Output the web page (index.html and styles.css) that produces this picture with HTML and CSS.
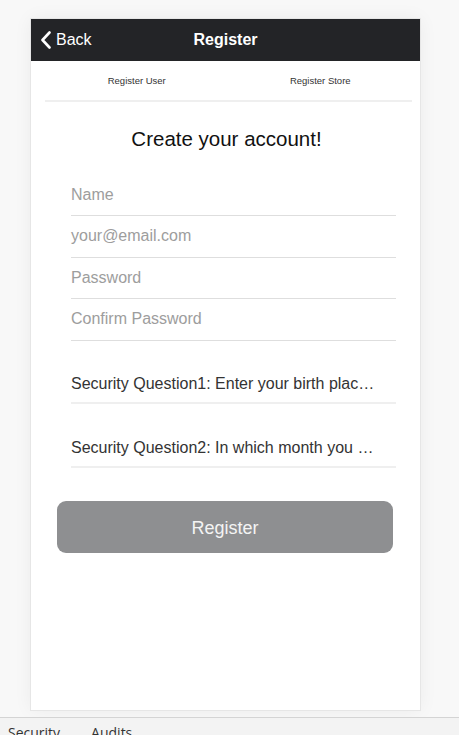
FILE: index.html
```html
<!DOCTYPE html>
<html lang="en">
<head>
<meta charset="utf-8">
<title>Register</title>
<link rel="stylesheet" href="styles.css">
</head>
<body>
<div class="viewport">
  <div class="phone">
    <header class="topbar">
      <div class="back">
        <svg class="chev" width="12" height="18" viewBox="0 0 12 18"><polyline points="9.5,1.5 2.5,9 9.5,16.5" fill="none" stroke="#ffffff" stroke-width="2.6" stroke-linecap="round" stroke-linejoin="round"/></svg>
        <span>Back</span>
      </div>
      <div class="title">Register</div>
      <div class="spacer"></div>
    </header>
    <nav class="tabs">
      <div class="tab">Register User</div>
      <div class="tab">Register Store</div>
    </nav>
    <h1 class="heading">Create your account!</h1>
    <form class="form">
      <div class="field placeholder">Name</div>
      <div class="field placeholder">your@email.com</div>
      <div class="field placeholder">Password</div>
      <div class="field placeholder">Confirm Password</div>
      <div class="select"><span class="select-text">Security Question1: Enter your birth place name?</span></div>
      <div class="select"><span class="select-text">Security Question2: In which month you were born?</span></div>
      <div class="btn">Register</div>
    </form>
  </div>
</div>
<div class="devtools">
  <span class="dt-tab">Security</span>
  <span class="dt-tab">Audits</span>
</div>
</body>
</html>
```
FILE: styles.css
```css
html, body {
  margin: 0;
  padding: 0;
}
body {
  width: 459px;
  height: 735px;
  overflow: hidden;
  background: #f8f8f8;
  font-family: "Liberation Sans", Arial, sans-serif;
  display: flex;
  flex-direction: column;
}
.viewport {
  height: 717px;
  flex: none;
  padding: 19px 0 0 31px;
  box-sizing: border-box;
}
.phone {
  width: 389px;
  height: 691px;
  background: #ffffff;
  box-shadow: 0 0 0 1px #e6e6e6, 0 0 18px rgba(0, 0, 0, 0.06);
  display: flex;
  flex-direction: column;
}
.topbar {
  height: 42px;
  flex: none;
  background: #232427;
  color: #ffffff;
  display: grid;
  grid-template-columns: 1fr auto 1fr;
  align-items: center;
}
.back {
  display: flex;
  align-items: center;
  gap: 4px;
  padding-left: 9px;
  font-size: 16px;
}
.chev {
  display: block;
}
.title {
  font-weight: bold;
  font-size: 16px;
}
.tabs {
  margin-left: 14px;
  width: 367px;
  height: 39px;
  flex: none;
  border-bottom: 2px solid #efefef;
  display: grid;
  grid-template-columns: 1fr 1fr;
  align-items: center;
}
.tab {
  text-align: center;
  font-size: 9.5px;
  color: #333333;
}
.heading {
  margin: 25px 0 0;
  font-weight: normal;
  font-size: 20.5px;
  line-height: 24px;
  text-align: center;
  color: #111111;
  padding-left: 2px;
}
.form {
  margin: 24px 0 0;
  display: flex;
  flex-direction: column;
}
.field {
  margin-left: 40px;
  width: 325px;
  height: 40.4px;
  line-height: 40px;
  border-bottom: 1px solid #dedede;
  font-size: 16px;
}
.placeholder {
  color: #9d9d9d;
}
.select {
  margin-left: 40px;
  width: 325px;
  height: 63.7px;
  box-sizing: border-box;
  padding: 0 20px 9px 0;
  border-bottom: 2px solid #efefef;
  display: flex;
  align-items: flex-end;
  font-size: 16px;
  color: #333333;
}
.select-text {
  display: block;
  width: 100%;
  white-space: nowrap;
  overflow: hidden;
  text-overflow: ellipsis;
}
.btn {
  margin: 33px 0 0 26px;
  width: 336px;
  height: 52px;
  box-sizing: border-box;
  padding-top: 3px;
  border-radius: 9px;
  background: #8e8f91;
  color: #f4f4f4;
  font-size: 18px;
  display: flex;
  align-items: center;
  justify-content: center;
}
.devtools {
  flex: 1;
  border-top: 1px solid #d4d4d4;
  background: #f3f3f3;
  padding: 5px 0 0 8px;
  display: flex;
  gap: 31px;
  font-family: "Open Sans", "Noto Sans", sans-serif;
  font-size: 14px;
  color: #333333;
}
```
